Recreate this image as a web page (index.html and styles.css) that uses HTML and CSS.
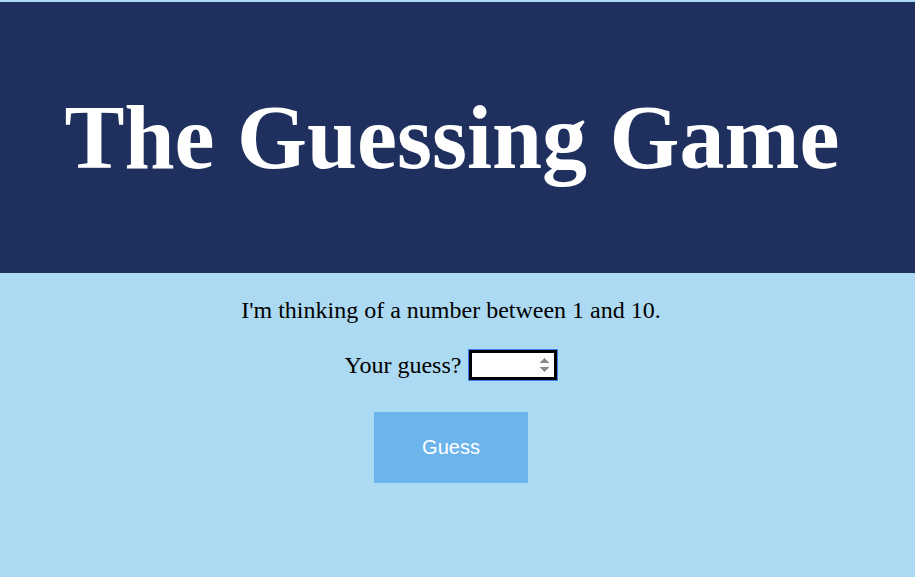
FILE: index.html
```html
<!DOCTYPE html>
<html>
<head>
<meta charset="utf-8">
<link rel="stylesheet" href="styles.css">
</head>
<body>
<div class="page">
  <header class="banner">
    <h1 class="title">The Guessing Game</h1>
  </header>
  <main class="game">
    <p class="prompt">I'm thinking of a number between 1 and 10.</p>
    <p class="prompt guess-row">Your guess?<input class="guess-input" type="number" autofocus></p>
    <button class="guess-btn">Guess</button>
  </main>
</div>
</body>
</html>
```
FILE: styles.css
```css
html, body {
  margin: 0;
  padding: 0;
  background: #addaf3;
  font-family: "Liberation Serif", "Times New Roman", serif;
}
.page {
  padding-top: 2px;
}
.banner {
  background: #1f2f5e;
  height: 271px;
  display: flex;
  align-items: center;
  justify-content: center;
  padding-right: 11px;
}
.title {
  margin: 0;
  color: #ffffff;
  font-size: 90px;
  font-weight: bold;
  line-height: 1;
}
.game {
  width: 902px;
  display: flex;
  flex-direction: column;
  align-items: center;
}
.prompt {
  margin: 22px 0 0;
  font-size: 24px;
  color: #000;
  line-height: 30px;
}
.guess-row {
  display: flex;
  align-items: center;
  gap: 8px;
  margin-top: 25px;
}
.guess-input {
  width: 88px;
  height: 30px;
  box-sizing: border-box;
  border: 3px solid #000;
  outline: 1px solid #3b82f6;
  font-size: 16px;
}
.guess-btn {
  margin-top: 32px;
  width: 154px;
  height: 71px;
  border: none;
  background: #6cb4ec;
  color: #fff;
  font-family: "Liberation Sans", Arial, sans-serif;
  font-size: 20px;
}
```
